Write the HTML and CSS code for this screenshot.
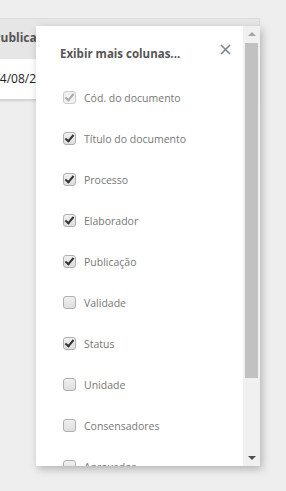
FILE: index.html
```html
<!DOCTYPE html>
<html lang="pt-BR">
<head>
    <meta charset="UTF-8">
    <title>Colunas</title>
    <link rel="stylesheet" href="styles.css">
</head>
<body>
<div class="grid">
    <div class="grid-head">Publicação</div>
    <div class="grid-row">24/08/2016</div>
</div>

<div class="columns-panel">
    <div class="panel-body">
        <div class="panel-title">
            <span>Exibir mais colunas...</span>
            <svg class="close" width="11" height="11" viewBox="0 0 11 11"><path d="M1 1L10 10M10 1L1 10" stroke="#7b8794" stroke-width="1.6" fill="none"/></svg>
        </div>
        <ul class="col-list">
            <li><span class="box checked disabled"></span>Cód. do documento</li>
            <li><span class="box checked"></span>Título do documento</li>
            <li><span class="box checked"></span>Processo</li>
            <li><span class="box checked"></span>Elaborador</li>
            <li><span class="box checked"></span>Publicação</li>
            <li><span class="box"></span>Validade</li>
            <li><span class="box checked"></span>Status</li>
            <li><span class="box"></span>Unidade</li>
            <li><span class="box"></span>Consensadores</li>
            <li><span class="box"></span>Aprovador</li>
        </ul>
    </div>
    <div class="scrollbar">
        <span class="arrow up"></span>
        <div class="track"><div class="thumb"></div></div>
        <span class="arrow down"></span>
    </div>
</div>
</body>
</html>
```
FILE: styles.css
```css
* {
    padding: 0;
    margin: 0;
    list-style: none;
    box-sizing: border-box;
}

body {
    background: #eeeeee;
    font-family: "Open Sans", "Liberation Sans", sans-serif;
    height: 491px;
    overflow: hidden;
    position: relative;
}

.grid {
    margin-top: 18px;
    margin-left: -7px;
    width: 267px;
    border-top: 1px solid #dcdcdc;
    border-right: 1px solid #dcdcdc;
}

.grid-head {
    height: 40px;
    line-height: 38px;
    background: #e6e6e6;
    font-weight: bold;
    font-size: 12px;
    color: #555;
    white-space: nowrap;
}

.grid-row {
    height: 40px;
    line-height: 40px;
    background: #fff;
    font-size: 12px;
    color: #222;
    box-shadow: 0 2px 2px rgba(0, 0, 0, 0.12);
}

/* painel de colunas */
.columns-panel {
    position: absolute;
    left: 36px;
    top: 26px;
    width: 224px;
    height: 440px;
    background: #fff;
    display: flex;
    box-shadow: 2px 3px 8px rgba(0, 0, 0, 0.25);
    overflow: hidden;
}

.panel-body {
    flex: 1;
    padding: 18px 0 0 24px;
}

.panel-title {
    display: flex;
    justify-content: space-between;
    align-items: center;
    padding-right: 12px;
    height: 18px;
    font-size: 11.5px;
    font-weight: bold;
    color: #555;
}

.close {
    margin-top: -8px;
}

.col-list {
    margin-top: 15px;
}

.col-list li {
    display: flex;
    align-items: center;
    height: 41px;
    font-size: 10.5px;
    color: #777;
}

.box {
    width: 13px;
    height: 13px;
    margin: 0 8px 0 3px;
    border: 1px solid #b0b0b0;
    border-radius: 3px;
    background: linear-gradient(#f0f0f0, #dedede);
    position: relative;
}

.box.checked::after {
    content: "";
    position: absolute;
    left: 3px;
    top: 0px;
    width: 3px;
    height: 7px;
    border: solid #333;
    border-width: 0 2px 2px 0;
    transform: rotate(40deg);
}

.box.disabled {
    border-color: #ccc;
    background: #f1f1f1;
}

.box.disabled::after {
    border-color: #aaa;
}

.scrollbar {
    width: 17px;
    background: #f0f0f0;
    display: flex;
    flex-direction: column;
    align-items: center;
}

.arrow {
    width: 0;
    height: 0;
    border-left: 4px solid transparent;
    border-right: 4px solid transparent;
    margin: 6px 0;
}

.arrow.up {
    border-bottom: 4px solid #a3a3a3;
}

.arrow.down {
    border-top: 4px solid #505050;
}

.track {
    flex: 1;
    width: 100%;
    padding: 1px 2px;
}

.thumb {
    height: 335px;
    background: #c1c1c1;
}
```
